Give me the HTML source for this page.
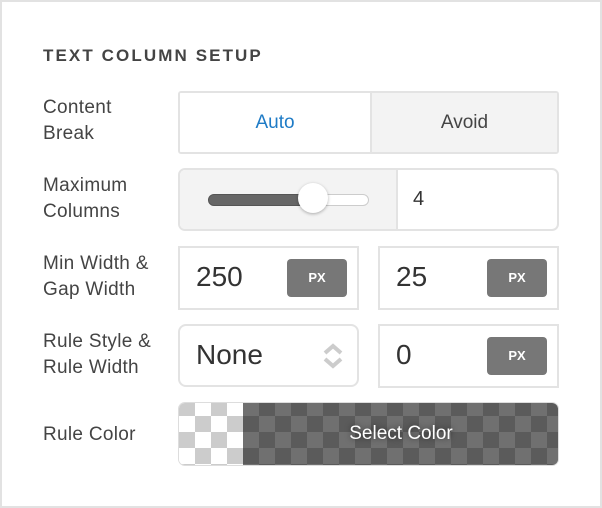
<!DOCTYPE html>
<html><head><style>
*{box-sizing:border-box;margin:0;padding:0}
body{width:602px;height:508px;background:#fff;font-family:"Liberation Sans",sans-serif;color:#444;position:relative;overflow:hidden}
.panel{position:absolute;left:0;top:0;width:602px;height:508px;border:2px solid #e2e2e2}
.h{position:absolute;left:43px;top:46px;font-size:17px;font-weight:bold;letter-spacing:2.1px;color:#444}
.lbl{position:absolute;left:43px;font-size:19px;line-height:26px;color:#444;letter-spacing:0.3px}
.box{position:absolute;border:2px solid #e3e3e3;background:#fff}
.px{position:absolute;right:10px;top:11px;width:60px;height:38px;background:#777;border-radius:4px;color:#fff;font-size:13px;font-weight:bold;text-align:center;line-height:38px}
.val{position:absolute;left:16px;top:0;line-height:58px;font-size:28px;color:#333}
</style></head><body>
<div class="panel"></div>
<div class="h">TEXT COLUMN SETUP</div>

<div class="lbl" style="top:95px">Content<br>Break</div>
<div class="box" style="left:178px;top:91px;width:381px;height:63px;border-radius:3px;overflow:hidden">
 <div style="position:absolute;left:0;top:0;width:190px;height:59px;background:#fff;color:#1e7bc6;font-size:19px;text-align:center;line-height:59px">Auto</div>
 <div style="position:absolute;left:190px;top:0;width:187px;height:59px;background:#f3f3f3;border-left:2px solid #e3e3e3;color:#444;font-size:19px;text-align:center;line-height:59px">Avoid</div>
</div>

<div class="lbl" style="top:173px">Maximum<br>Columns</div>
<div class="box" style="left:178px;top:168px;width:381px;height:63px;border-radius:7px;overflow:hidden">
 <div style="position:absolute;left:0;top:0;width:218px;height:59px;background:#f3f3f3;border-right:2px solid #e3e3e3">
  <div style="position:absolute;left:28px;top:24px;width:161px;height:12px;border-radius:6px;background:#fff;border:1px solid #ccc"></div>
  <div style="position:absolute;left:28px;top:24px;width:110px;height:12px;border-radius:6px;background:#666;border:1px solid #555"></div>
  <div style="position:absolute;left:118px;top:13px;width:30px;height:30px;border-radius:50%;background:#fff;box-shadow:0 1px 3px rgba(0,0,0,.3)"></div>
 </div>
 <div style="position:absolute;left:233px;top:0;line-height:59px;font-size:20px;color:#333">4</div>
</div>

<div class="lbl" style="top:251px">Min Width &amp;<br>Gap Width</div>
<div class="box" style="left:178px;top:246px;width:181px;height:64px"><div class="val">250</div><div class="px">PX</div></div>
<div class="box" style="left:378px;top:246px;width:181px;height:64px"><div class="val">25</div><div class="px">PX</div></div>

<div class="lbl" style="top:329px">Rule Style &amp;<br>Rule Width</div>
<div class="box" style="left:178px;top:324px;width:181px;height:63px;border-radius:8px"><div class="val">None</div>
 <svg style="position:absolute;left:142px;top:17px" width="22" height="26" viewBox="0 0 22 26"><path d="M3 10 L11 3 L19 10" fill="none" stroke="#ccc" stroke-width="4"/><path d="M3 16 L11 23 L19 16" fill="none" stroke="#ccc" stroke-width="4"/></svg>
</div>
<div class="box" style="left:378px;top:324px;width:181px;height:64px"><div class="val">0</div><div class="px">PX</div></div>

<div class="lbl" style="top:422px">Rule Color</div>
<div style="position:absolute;left:178px;top:402px;width:381px;height:64px;border-radius:7px;overflow:hidden;border:1px solid #ddd">
 <div style="position:absolute;left:0;top:-3px;width:64px;height:70px;background-color:#fff;background-image:linear-gradient(45deg,#ccc 25%,transparent 25%,transparent 75%,#ccc 75%),linear-gradient(45deg,#ccc 25%,transparent 25%,transparent 75%,#ccc 75%);background-size:32px 32px;background-position:16px 0,0 16px"></div>
 <div style="position:absolute;left:64px;top:-3px;width:320px;height:70px;background-color:#5b5b5b;background-image:linear-gradient(45deg,#707070 25%,transparent 25%,transparent 75%,#707070 75%),linear-gradient(45deg,#707070 25%,transparent 25%,transparent 75%,#707070 75%);background-size:32px 32px;background-position:16px 0,0 16px"></div>
 <div style="position:absolute;left:64px;top:0;width:316px;height:62px;text-align:center;line-height:62px;color:#fff;font-size:19px;text-shadow:0 0 6px rgba(0,0,0,.6)">Select Color</div>
</div>
</body></html>
